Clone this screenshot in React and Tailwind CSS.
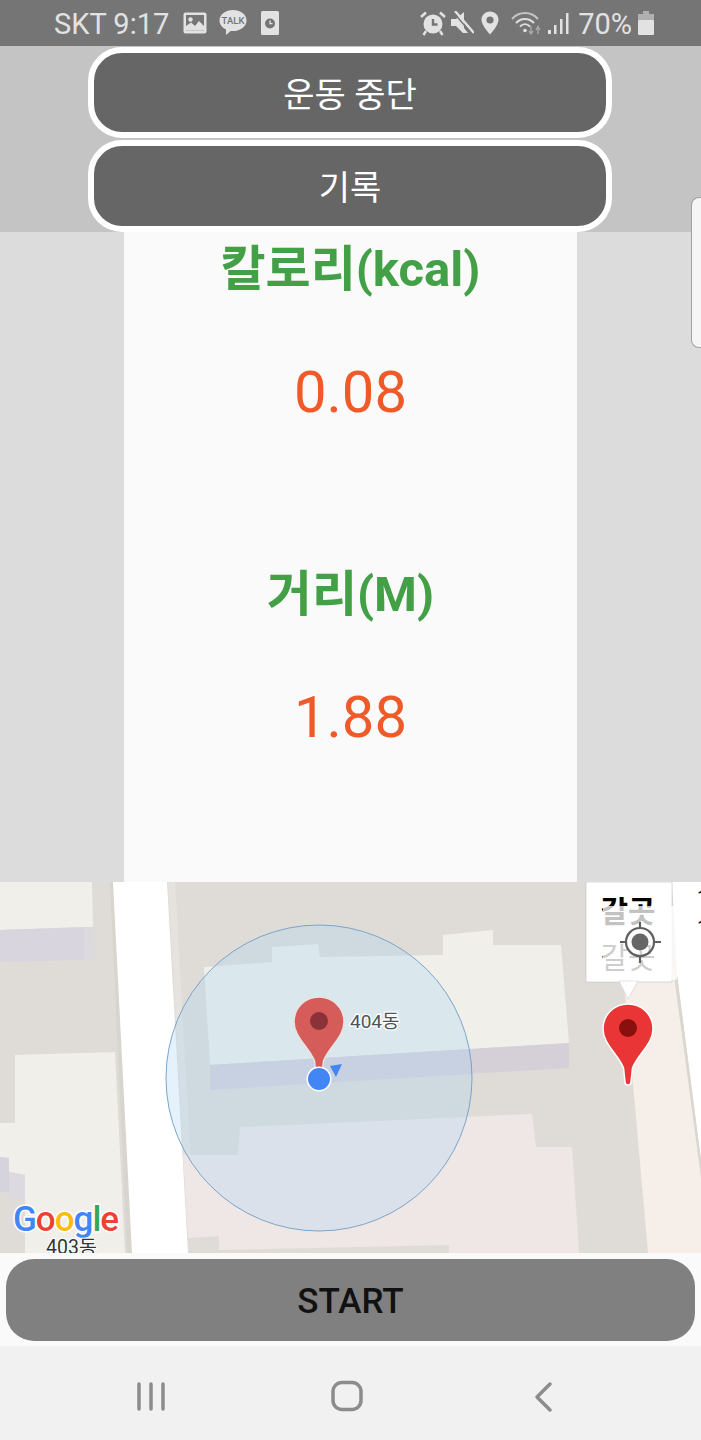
import React from 'react';

const FONT = "font-[Roboto,'Noto_Sans_CJK_KR',sans-serif]";

// status bar icons
const ImageIcon = () => (
  <svg width="24" height="22" viewBox="0 0 24 22" className="ml-[14px]">
    <rect x="0.5" y="0.5" width="23" height="21" rx="2" fill="#e2e2e2" />
    <rect x="3" y="3" width="18" height="15.5" fill="#757575" />
    <circle cx="7.5" cy="7.5" r="2.2" fill="#e2e2e2" />
    <path d="M3 18.5 L3 14 L8 10.5 L12 14 L16 9 L21 14 L21 18.5 Z" fill="#e2e2e2" />
  </svg>
);

const TalkIcon = () => (
  <svg width="28" height="26" viewBox="0 0 28 26" className="ml-[12px]">
    <ellipse cx="14" cy="10.5" rx="13.5" ry="10.5" fill="#e2e2e2" />
    <path d="M7 17 L7 25 L14 19 Z" fill="#e2e2e2" />
    <text x="14" y="14" textAnchor="middle" fontSize="9.5" fontFamily="Roboto" fontWeight="500" fill="#757575">TALK</text>
  </svg>
);

const WatchIcon = () => (
  <svg width="18" height="24" viewBox="0 0 18 24" className="ml-[14px]">
    <rect x="0" y="0" width="18" height="24" rx="1.5" fill="#e2e2e2" />
    <circle cx="9" cy="12.5" r="5" fill="#757575" />
    <path d="M9 9.5 V12.7 H11.5" stroke="#e2e2e2" strokeWidth="1.3" fill="none" />
  </svg>
);

const AlarmIcon = () => (
  <svg width="26" height="25" viewBox="0 0 26 25">
    <circle cx="13" cy="13" r="9.5" fill="#e2e2e2" />
    <path d="M13 8 V13.5 H17.5" stroke="#757575" strokeWidth="2.4" fill="none" />
    <path d="M1 6 L6 1.5 M25 6 L20 1.5" stroke="#e2e2e2" strokeWidth="2.6" />
    <path d="M6 20 L3.5 24 M20 20 L22.5 24" stroke="#e2e2e2" strokeWidth="2.4" />
  </svg>
);

const MuteIcon = () => (
  <svg width="24" height="24" viewBox="0 0 24 24" className="ml-[4px]">
    <path d="M1 8 H6 L14 1 V17 L18 22 H13 L6 15 H1 Z" fill="#e2e2e2" />
    <path d="M3 1 L22 23" stroke="#757575" strokeWidth="1.5" />
    <path d="M5 0 L24 22" stroke="#e2e2e2" strokeWidth="2.4" />
  </svg>
);

const PinIcon = () => (
  <svg width="18" height="24" viewBox="0 0 18 24" className="ml-[7px]">
    <path d="M9 0.5 C4 0.5 0.5 4.2 0.5 8.8 C0.5 14.5 9 23.5 9 23.5 C9 23.5 17.5 14.5 17.5 8.8 C17.5 4.2 14 0.5 9 0.5 Z" fill="#e2e2e2" />
    <circle cx="9" cy="9" r="3.6" fill="#757575" />
  </svg>
);

const WifiIcon = () => (
  <svg width="32" height="24" viewBox="0 0 32 24" className="ml-[12px]">
    <path d="M1 8 C8 0 20 0 27 8" stroke="#c4c4c4" strokeWidth="2" fill="none" />
    <path d="M5 12 C10 6.5 18 6.5 23 12" stroke="#dedede" strokeWidth="2" fill="none" />
    <path d="M9 15.5 C12 12.5 16 12.5 19 15.5" stroke="#dedede" strokeWidth="2" fill="none" />
    <circle cx="14" cy="19.5" r="1.8" fill="#e2e2e2" />
    <path d="M20 15 V22 M18 20 L20 23 L22 20" stroke="#a8a8a8" strokeWidth="1.4" fill="none" />
    <path d="M27 23 V16 M25 19 L27 15.5 L29 19" stroke="#a8a8a8" strokeWidth="1.4" fill="none" />
  </svg>
);

const SignalIcon = () => (
  <svg width="21" height="24" viewBox="0 0 21 24" className="ml-[5px]">
    <rect x="0" y="19" width="3" height="4" fill="#e2e2e2" />
    <rect x="6" y="14" width="2.5" height="9" fill="#e2e2e2" />
    <rect x="12" y="8" width="2.5" height="15" fill="#e2e2e2" />
    <rect x="18" y="2" width="2.5" height="21" fill="#e2e2e2" />
  </svg>
);

const BatteryIcon = () => (
  <svg width="16" height="24" viewBox="0 0 16 24" className="ml-[6px]">
    <rect x="5" y="0" width="6" height="3" fill="#b0b0b0" />
    <rect x="0" y="3" width="16" height="6" fill="#b0b0b0" />
    <rect x="0" y="9" width="16" height="15" rx="1" fill="#e2e2e2" />
  </svg>
);

const StatusBar = () => (
  <div className={`h-[46px] bg-[#757575] flex items-center justify-between pl-[54px] pr-[47px] text-[#e2e2e2] text-[29px] ${FONT}`}>
    <div className="flex items-center">
      <span className="pt-[3px]">SKT 9:17</span>
      <ImageIcon />
      <TalkIcon />
      <WatchIcon />
    </div>
    <div className="flex items-center">
      <AlarmIcon />
      <MuteIcon />
      <PinIcon />
      <WifiIcon />
      <SignalIcon />
      <span className="ml-[9px] pt-[3px]">70%</span>
      <BatteryIcon />
    </div>
  </div>
);

const DarkButton = ({ label, className }) => (
  <div className={`w-[524px] ml-[88px] border-[6px] border-white rounded-[34px] bg-[#666666] flex items-center justify-center pt-[5px] text-white text-[34px] ${className}`}>
    {label}
  </div>
);

const Metric = ({ title, value, className }) => (
  <div className={`flex flex-col items-center ${className}`}>
    <div className="text-[#43a047] text-[49px] font-bold leading-[50px]">{title}</div>
    <div className="text-[#ef5a28] text-[58px] leading-[66px] mt-[64px]">{value}</div>
  </div>
);

const MapPin = ({ cx, top, fill, dot, stroke }) => (
  <g transform={`translate(${cx} ${top})`}>
    <path
      d="M0 0 C14 0 25 11 25 25 C25 40 10 50 4.5 64 L3 78 C3 82 -3 82 -3 78 L-4.5 64 C-10 50 -25 40 -25 25 C-25 11 -14 0 0 0 Z"
      fill={fill}
      stroke={stroke}
      strokeWidth="1.5"
    />
    <circle cx="0" cy="24" r="9" fill={dot} />
  </g>
);

const MapView = () => (
  <svg width="701" height="371" viewBox="0 882 701 371" className="block">
    <rect x="0" y="882" width="701" height="371" fill="#dfdcd7" />

    {/* buildings left */}
    <polygon points="0,882 92,882 93,927 0,930" fill="#f0efe9" />
    <polygon points="0,930 84,927 84,960 0,962" fill="#d8d5de" />
    <polygon points="84,927 93,927 94,959 84,960" fill="#dcd9df" />
    <polygon points="15,1055 115,1052 125,1253 25,1253 25,1175 9,1172 9,1158 0,1157 0,1123 15,1123" fill="#f0efe9" />
    <polygon points="0,1157 9,1158 9,1192 0,1192" fill="#d5d3dd" />
    <polygon points="9,1172 25,1175 25,1200 9,1198" fill="#dcdae0" />

    {/* road */}
    <polygon points="168,882 175,882 196,1253 189,1253" fill="#e6e3de" />
    <polygon points="110,882 113,882 132,1253 127,1253" fill="#d8d5cf" />
    <polygon points="113,882 167,882 188,1253 132,1253" fill="#ffffff" />

    {/* center building */}
    <polygon points="204,967 272,962 272,947 318,944 320,957 443,955 443,935 493,930 493,945 561,945 569,1043 210,1065" fill="#f0efe9" />
    <polygon points="210,1065 569,1043 569,1068 210,1090" fill="#d5d0d8" />
    <polygon points="183,1155 238,1155 240,1127 532,1114 536,1147 572,1147 579,1253 189,1253" fill="#efe7e6" />
    <polygon points="188,1238 219,1236 219,1253 189,1253" fill="#dfdcd7" />
    <polygon points="219,1250 449,1245 449,1253 219,1253" fill="#dfdcd7" />

    {/* right side road and white block */}
    <polygon points="622,960 672,960 701,1170 701,1253 648,1253" fill="#f6eee8" />
    <polygon points="672,882 701,882 701,1160 677,975" fill="#ffffff" />
    <polygon points="674,975 677,975 701,1160 701,1178" fill="#dad7d1" />
    <text x="697" y="905" fontSize="20" fontFamily="Roboto" fill="#111">1</text>
    <text x="697" y="935" fontSize="20" fontFamily="Roboto" fill="#111">1</text>

    {/* accuracy circle */}
    <circle cx="319" cy="1078" r="153" fill="#a8d4f5" fillOpacity="0.3" stroke="#7aa5cc" strokeWidth="1" />

    <text x="350" y="1028" fontSize="19" fontFamily="Roboto, 'Noto Sans CJK KR', sans-serif" fill="#4a5560" stroke="#ffffff" strokeWidth="2.5" paintOrder="stroke">404동</text>
    <MapPin cx={319} top={997} fill="#d65c5a" dot="#8a3238" stroke="#e8e4e0" />
    <polygon points="330,1066 342,1064 336,1077" fill="#4285f4" />
    <circle cx="319" cy="1079" r="12.5" fill="#ffffff" />
    <circle cx="319" cy="1079" r="11" fill="#4285f4" />

    {/* info window */}
    <rect x="586" y="882" width="86" height="100" fill="#ffffff" stroke="#b8b8b8" strokeWidth="0.5" />
    <text x="628" y="922" textAnchor="middle" fontSize="30" fontWeight="700" fontFamily="'Noto Sans CJK KR', sans-serif" fill="#000">갈곳</text>
    <text x="628" y="968" textAnchor="middle" fontSize="30" fontFamily="'Noto Sans CJK KR', sans-serif" fill="#333">갈곳</text>
    <polygon points="619,981 638,981 628,999" fill="#ffffff" stroke="#c8c8c8" strokeWidth="0.5" />
    <MapPin cx={628} top={1004} fill="#e93535" dot="#8a0f0f" stroke="#ffffff" />

    {/* my location button */}
    <rect x="603" y="906" width="74" height="74" rx="2" fill="#ffffff" fillOpacity="0.76" />
    <circle cx="640" cy="942" r="14" fill="none" stroke="#5f5f5f" strokeWidth="2.2" />
    <circle cx="640" cy="942" r="8.5" fill="#666666" />
    <path d="M640 922 V928 M640 956 V963 M620 942 H626 M654 942 H661" stroke="#5f5f5f" strokeWidth="2.2" />

    {/* google logo */}
    <text x="13" y="1231" fontSize="35" fontFamily="Roboto, sans-serif" fontWeight="500" stroke="#ffffff" strokeWidth="3" paintOrder="stroke" letterSpacing="-1">
      <tspan fill="#4285f4">G</tspan>
      <tspan fill="#ea4335">o</tspan>
      <tspan fill="#fbbc05">o</tspan>
      <tspan fill="#4285f4">g</tspan>
      <tspan fill="#34a853">l</tspan>
      <tspan fill="#ea4335">e</tspan>
    </text>
    <text x="46" y="1254" fontSize="19.5" fontFamily="Roboto, 'Noto Sans CJK KR', sans-serif" fill="#333" stroke="#ffffff" strokeWidth="2" paintOrder="stroke">403동</text>
  </svg>
);

const NavBar = () => (
  <div className="h-[94px] bg-[#f1f1f1] relative">
    <svg width="701" height="94" viewBox="0 1346 701 94" className="block">
      <path d="M139 1384 V1409 M151 1384 V1409 M163 1384 V1409" stroke="#8c8c8c" strokeWidth="3.5" strokeLinecap="round" />
      <rect x="333" y="1382.5" width="28" height="27" rx="9" fill="none" stroke="#8c8c8c" strokeWidth="3.5" />
      <path d="M550 1384 L537 1397 L550 1410" stroke="#8c8c8c" strokeWidth="3.5" fill="none" strokeLinecap="round" strokeLinejoin="round" />
    </svg>
  </div>
);

const App = () => {
  return (
    <div className={`w-[701px] h-[1440px] relative overflow-hidden bg-white flex flex-col ${FONT}`}>
      <StatusBar />

      <div className="h-[186px] bg-[#c4c4c4] flex flex-col pt-px gap-[2px]">
        <DarkButton label="운동 중단" className="h-[91px]" />
        <DarkButton label="기록" className="h-[92px]" />
      </div>

      <div className="h-[650px] bg-[#dcdcdc]">
        <div className="w-[453px] h-full bg-[#fafafa] ml-[124px] pt-[13px]">
          <Metric title="칼로리(kcal)" value="0.08" />
          <Metric title="거리(M)" value="1.88" className="mt-[145px]" />
        </div>
      </div>

      <MapView />

      <div className="h-[93px] bg-[#fafafa] px-[6px] pt-[6px]">
        <div className="h-[82px] rounded-[28px] bg-[#808080] flex items-center justify-center pt-[5px] text-[#111111] text-[35px] font-medium">
          START
        </div>
      </div>

      <NavBar />

      {/* edge panel handle */}
      <div className="absolute right-0 top-[197px] w-[10px] h-[151px] bg-[#f5f5f5] border border-r-0 border-[#a0a0a0] rounded-l-[8px]" />
    </div>
  );
};

export default App;
